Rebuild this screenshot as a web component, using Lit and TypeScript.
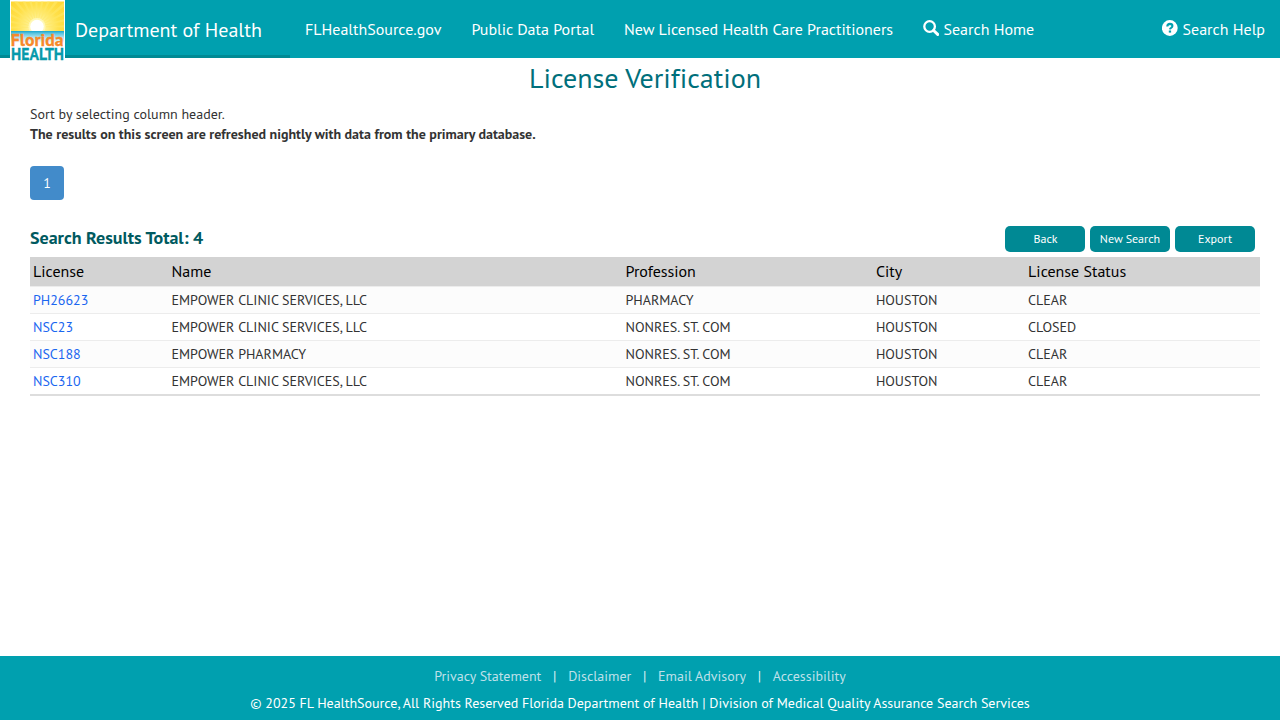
import { LitElement, html, css, svg } from "lit";
import { customElement } from "lit/decorators.js";

const HEAD = ["License", "Name", "Profession", "City", "License Status"];
const ROWS = [
  ["PH26623", "EMPOWER CLINIC SERVICES, LLC", "PHARMACY", "HOUSTON", "CLEAR"],
  ["NSC23", "EMPOWER CLINIC SERVICES, LLC", "NONRES. ST. COM", "HOUSTON", "CLOSED"],
  ["NSC188", "EMPOWER PHARMACY", "NONRES. ST. COM", "HOUSTON", "CLEAR"],
  ["NSC310", "EMPOWER CLINIC SERVICES, LLC", "NONRES. ST. COM", "HOUSTON", "CLEAR"],
];

const rays = Array.from({ length: 15 }, (_, i) => {
  const a = (Math.PI * (i + 0.1)) / 14;
  const p = (o: number) => `${27 + 45 * Math.cos(a + o)},${27 - 45 * Math.sin(a + o)}`;
  return svg`<polygon points="27,27 ${p(-0.045)} ${p(0.045)}" fill="#ffe765" opacity=".6"/>`;
});

const logo = html`<svg class="logo" width="55" height="62" viewBox="0 0 55 62">
  <defs>
    <radialGradient id="sky" gradientUnits="userSpaceOnUse" cx="27" cy="27" r="36">
      <stop offset="0" stop-color="#fffbd0"/><stop offset=".3" stop-color="#ffee84"/>
      <stop offset=".62" stop-color="#ffe04a"/><stop offset="1" stop-color="#ffd633"/>
    </radialGradient>
    <linearGradient id="sea" x2="0" y2="1">
      <stop offset="0" stop-color="#18a5cd"/><stop offset=".2" stop-color="#5cc5e0"/><stop offset=".5" stop-color="#a8e0ec"/><stop offset="1" stop-color="#fff"/>
    </linearGradient>
    <clipPath id="frame"><rect x="1" y="1.5" width="53" height="29.5"/></clipPath>
  </defs>
  <rect width="55" height="61" fill="#fff"/>
  <g clip-path="url(#frame)">
    <rect width="55" height="32" fill="url(#sky)"/>${rays}
    <circle cx="27" cy="26.5" r="8.5" fill="#fff8b8"/><circle cx="27" cy="26.5" r="6.8" fill="#fff"/>
  </g>
  <rect x="1" y="31" width="53" height="12" fill="url(#sea)"/>
  <text class="florida" x="0.8" y="46.4" textLength="52.8" lengthAdjust="spacingAndGlyphs">Florida</text>
  <text class="health" x="1" y="60.4" textLength="53" lengthAdjust="spacingAndGlyphs">HEALTH</text>
</svg>`;

const searchIcon = html`<svg class="icon" width="16" height="17" viewBox="0 0 16 17">
  <circle cx="6.6" cy="6.5" r="5.3" fill="none" stroke="#fff" stroke-width="2.3"/>
  <path d="M10.6 10.5L14.7 14.4" stroke="#fff" stroke-width="3" stroke-linecap="round"/>
</svg>`;

const helpIcon = html`<svg class="icon" width="16" height="17" viewBox="0 0 16 17">
  <circle cx="7.8" cy="8" r="7.9" fill="#fff"/>
  <path d="M5.3 6.5Q5.4 3.9 7.9 3.9Q10.4 4 10.4 6Q10.4 7.2 9.1 7.9Q8.1 8.4 8 9.3" fill="none" stroke="#00a0af" stroke-width="2.1"/>
  <rect x="6.8" y="10.5" width="2.3" height="2.1" fill="#00a0af"/>
</svg>`;

@customElement("app-root")
export class AppRoot extends LitElement {
  static styles = css`
    :host {
      display: flex; flex-direction: column; height: 720px; overflow: hidden; background: #fff;
      font-family: "PT Sans", "Noto Sans", "Open Sans", sans-serif; font-size: 14px; line-height: 20px; color: #333;
      font-variant-ligatures: none;
    }
    a { text-decoration: none; color: inherit; }
    header { display: flex; height: 58px; flex: none; background: #00a0af; color: #fff; font-size: 16px; }
    .brand { box-sizing: border-box; width: 290px; height: 58px; padding-left: 10px; display: flex; gap: 10px; border-bottom: 3px solid #008a94; font-size: 20px; line-height: 60px; }
    .logo { flex: none; display: block; overflow: visible; position: relative; z-index: 1; }
    .florida { font: 700 18px "PT Sans", sans-serif; fill: #f6892a; stroke: #f6892a; stroke-width: 0.3px; }
    .health { font: 700 18px "PT Sans", sans-serif; fill: #079aab; stroke: #079aab; stroke-width: 0.3px; }
    nav { display: flex; flex: 1; line-height: 59px; }
    nav a { display: flex; padding: 0 15px; white-space: nowrap; }
    .help { margin-left: auto; }
    .icon { margin: 20px 4.4px 0 0; flex: none; }
    main { flex: 1; padding: 0 20px 0 30px; }
    h1 { margin: 0; font-weight: 400; font-size: 28px; line-height: 40px; color: #006f7b; text-align: center; height: 46px; }
    .note { height: 20px; }
    .strong { font-weight: 700; }
    .page { display: flex; justify-content: center; width: 34px; height: 34px; line-height: 34px; margin-top: 22px; border-radius: 4px; background: #428bca; color: #fff; }
    .bar { display: flex; gap: 5px; height: 26px; margin-top: 26px; padding-right: 5px; }
    h2 { margin: 0 auto 0 0; font-size: 18px; line-height: 24px; font-weight: 700; color: #005a60; }
    .btn { width: 80px; height: 26px; padding: 0; border: 0; border-radius: 5px; background: #008994; color: #fff; font: 12px/26px "PT Sans", "Noto Sans", sans-serif; text-align: center; }
    .btn:first-of-type { padding-left: 1px; }
    .table { margin-top: 5px; border-bottom: 2px solid #ddd; }
    .row { display: grid; grid-template-columns: 138.5px 454px 250.4px 152.2px 1fr; padding-left: 3px; height: 26px; line-height: 26px; border-top: 1px solid #ececec; }
    .row:nth-child(even) { background: #fcfcfc; }
    .row.head { height: 29px; border: 0; line-height: 29px; background: #d3d3d3; color: #000; font-size: 16px; }
    .row a { color: #1a66f0; }
    footer { height: 64px; flex: none; background: #00a0af; color: #fff; text-align: center; }
    .links { display: flex; justify-content: center; height: 27px; line-height: 41px; color: #bfe0ea; }
    .sep { width: 26.8px; text-align: center; color: #e2f4f7; }
    .copy { line-height: 41px; }
  `;

  render() {
    return html`
      <header>
        <div class="brand">${logo}<span>Department of Health</span></div>
        <nav>
          <a>FLHealthSource.gov</a>
          <a>Public Data Portal</a>
          <a>New Licensed Health Care Practitioners</a>
          <a>${searchIcon}<span>Search Home</span></a>
          <a class="help">${helpIcon}<span>Search Help</span></a>
        </nav>
      </header>
      <main>
        <h1>License Verification</h1>
        <div class="note">Sort by selecting column header.</div>
        <div class="note strong">The results on this screen are refreshed nightly with data from the primary database.</div>
        <div class="page">1</div>
        <div class="bar">
          <h2>Search Results Total: 4</h2>
          <button class="btn">Back</button>
          <button class="btn">New Search</button>
          <button class="btn">Export</button>
        </div>
        <div class="table">
          <div class="row head">${HEAD.map((s) => html`<span>${s}</span>`)}</div>
          ${ROWS.map((r) => html`<div class="row">
            ${r.map((s, i) => (i === 0 ? html`<a>${s}</a>` : html`<span>${s}</span>`))}
          </div>`)}
        </div>
      </main>
      <footer>
        <div class="links">
          <a>Privacy Statement</a><span class="sep">|</span><a>Disclaimer</a><span class="sep">|</span><a>Email Advisory</a><span class="sep">|</span><a>Accessibility</a>
        </div>
        <div class="copy">© 2025 FL HealthSource, All Rights Reserved Florida Department of Health | Division of Medical Quality Assurance Search Services</div>
      </footer>
    `;
  }
}
